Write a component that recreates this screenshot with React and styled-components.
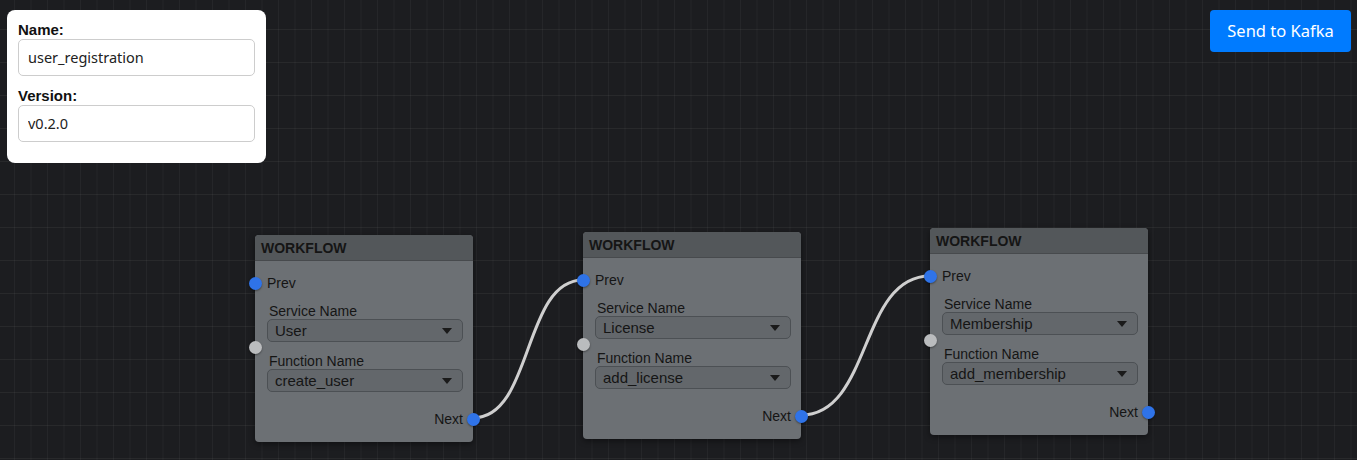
import React from "react";
import styled, { createGlobalStyle } from "styled-components";

const GlobalStyle = createGlobalStyle`
  html, body {
    margin: 0;
    padding: 0;
    background: #1c1d20;
  }
  * {
    box-sizing: border-box;
  }
`;

const nodes = [
  { id: 1, x: 255, y: 235, service: "User", fn: "create_user" },
  { id: 2, x: 583, y: 232, service: "License", fn: "add_license" },
  { id: 3, x: 930, y: 228, service: "Membership", fn: "add_membership" },
];

const NODE_W = 218;
const PREV_DY = 48;
const NEXT_DY = 183;

const App = () => {
  const links = nodes.slice(0, -1).map((n, i) => {
    const to = nodes[i + 1];
    const x1 = n.x + NODE_W;
    const y1 = n.y + NEXT_DY;
    const x2 = to.x;
    const y2 = to.y + PREV_DY;
    const c = (x2 - x1) * 0.55;
    return `M ${x1} ${y1} C ${x1 + c} ${y1}, ${x2 - c} ${y2}, ${x2} ${y2}`;
  });

  return (
    <>
      <GlobalStyle />
      <Canvas>
        <Links width="1357" height="460">
          {links.map((d, i) => (
            <path key={i} d={d} />
          ))}
        </Links>

        <MetaPanel>
          <FieldLabel>Name:</FieldLabel>
          <TextInput defaultValue="user_registration" />
          <FieldLabel>Version:</FieldLabel>
          <TextInput defaultValue="v0.2.0" />
        </MetaPanel>

        <SendButton>Send to Kafka</SendButton>

        {nodes.map((n) => (
          <Node key={n.id} style={{ left: n.x, top: n.y }}>
            <NodeTitle>WORKFLOW</NodeTitle>
            <NodeBody>
              <PortRow>
                <Socket $side="left" />
                <span>Prev</span>
              </PortRow>
              <Controls>
                <Socket $side="left" $idle />
                <ControlLabel>Service Name</ControlLabel>
                <Select>
                  {n.service}
                  <Caret />
                </Select>
                <ControlLabel>Function Name</ControlLabel>
                <Select>
                  {n.fn}
                  <Caret />
                </Select>
              </Controls>
              <PortRow $out>
                <span>Next</span>
                <Socket $side="right" />
              </PortRow>
            </NodeBody>
          </Node>
        ))}
      </Canvas>
    </>
  );
};

const Canvas = styled.div`
  position: relative;
  width: 1357px;
  height: 460px;
  overflow: hidden;
  background-color: #1c1d20;
  background-image: linear-gradient(
      to right,
      rgba(255, 255, 255, 0.04) 1px,
      transparent 1px
    ),
    linear-gradient(to bottom, rgba(255, 255, 255, 0.05) 1px, transparent 1px);
  background-size: 16.5px 100%, 100% 33px;
  background-position: 14px 0, 0 29px;
`;

const Links = styled.svg`
  position: absolute;
  inset: 0;
  path {
    fill: none;
    stroke: #cfcfcf;
    stroke-width: 3px;
  }
`;

const MetaPanel = styled.div`
  position: absolute;
  left: 7px;
  top: 10px;
  width: 259px;
  height: 153px;
  background: #fff;
  border-radius: 8px;
  padding: 11px 11px 0 11px;
  display: flex;
  flex-direction: column;
`;

const FieldLabel = styled.label`
  font-family: "Liberation Sans", Arial, sans-serif;
  font-weight: bold;
  font-size: 15px;
  line-height: 18px;
  color: #111;
`;

const TextInput = styled.input`
  width: 237px;
  height: 37px;
  border: 1px solid #cdcdcd;
  border-radius: 5px;
  padding: 0 9px 2px;
  font-family: "Noto Sans", "Open Sans", sans-serif;
  font-size: 14.5px;
  color: #222;
  outline: none;
  margin-bottom: 11px;
`;

const SendButton = styled.button`
  position: absolute;
  right: 6px;
  top: 10px;
  width: 141px;
  height: 42px;
  border: none;
  border-radius: 4px;
  background: #007bff;
  color: #fff;
  font-family: "Noto Sans", "Open Sans", sans-serif;
  font-size: 16.5px;
  padding-bottom: 2px;
  cursor: pointer;
`;

const Node = styled.div`
  position: absolute;
  width: 218px;
  height: 207px;
  background: #6c7074;
  border-radius: 4px;
  box-shadow: 0 2px 6px rgba(0, 0, 0, 0.45);
  font-family: "Liberation Sans", Arial, sans-serif;
  color: #151515;
  display: flex;
  flex-direction: column;
`;

const NodeTitle = styled.div`
  height: 26px;
  background: #53575a;
  border-radius: 4px 4px 0 0;
  border-bottom: 1px solid #474a4d;
  padding: 0 6px;
  display: flex;
  align-items: center;
  font-weight: bold;
  font-size: 14px;
`;

const NodeBody = styled.div`
  padding: 12px 10px 0 12px;
  display: flex;
  flex-direction: column;
`;

const PortRow = styled.div`
  position: relative;
  height: 20px;
  display: flex;
  align-items: center;
  justify-content: ${(p) => (p.$out ? "flex-end" : "flex-start")};
  font-size: 14px;
  margin-top: ${(p) => (p.$out ? "17px" : "0")};
`;

const Socket = styled.span`
  position: absolute;
  top: 50%;
  ${(p) => (p.$side === "left" ? "left: -18.5px;" : "right: -16.5px;")}
  width: 13px;
  height: 13px;
  margin-top: -6.5px;
  border-radius: 50%;
  background: ${(p) => (p.$idle ? "#babcbe" : "#2f73e8")};
  box-shadow: 0 1px 2px rgba(0, 0, 0, 0.4);
`;

const Controls = styled.div`
  position: relative;
  margin-top: 10px;
  display: flex;
  flex-direction: column;
`;

const ControlLabel = styled.div`
  font-size: 14px;
  line-height: 16px;
  padding-left: 2px;
  &:not(:nth-child(2)) {
    margin-top: 11px;
  }
`;

const Select = styled.div`
  position: relative;
  height: 23px;
  border: 1px solid #4c5054;
  border-radius: 5px;
  background: #63676b;
  padding: 0 0 0 7px;
  display: flex;
  align-items: center;
  font-size: 15px;
  color: #151515;
`;

const Caret = styled.span`
  position: absolute;
  right: 10px;
  top: 50%;
  margin-top: -3px;
  width: 0;
  height: 0;
  border-left: 5.5px solid transparent;
  border-right: 5.5px solid transparent;
  border-top: 6px solid #1a1a1a;
`;

export default App;
